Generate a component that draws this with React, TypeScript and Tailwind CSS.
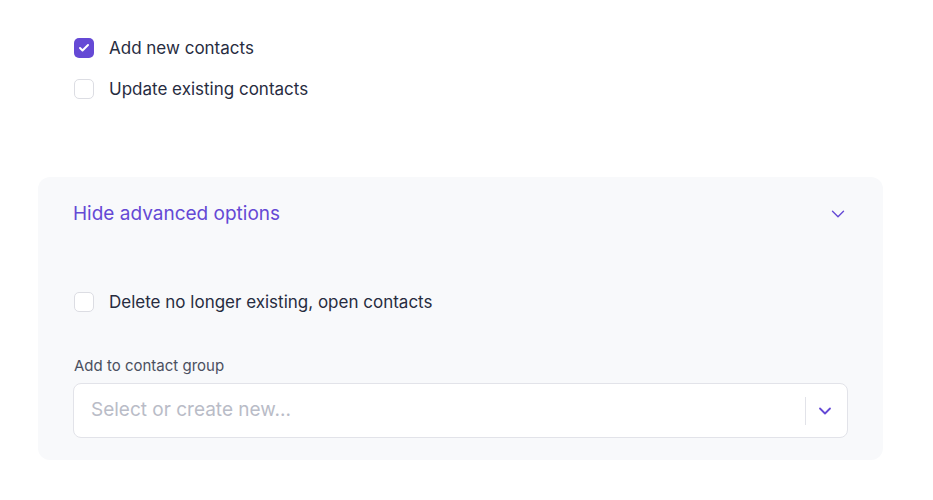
import { Check, ChevronDown } from "lucide-react";

function Box({ checked }: { checked?: boolean }) {
  return (
    <span
      className={
        checked
          ? "flex size-5 shrink-0 items-center justify-center rounded-[5px] bg-[#6549d5]"
          : "flex size-5 shrink-0 items-center justify-center rounded-[5px] border border-[#dcdde3] bg-white"
      }
    >
      {checked && <Check className="size-3 text-white" strokeWidth={4} />}
    </span>
  );
}

function Option({ label, checked }: { label: string; checked?: boolean }) {
  return (
    <label className="flex items-center gap-[15px] text-[17px] leading-[24px] text-[#272c3f]">
      <Box checked={checked} />
      {label}
    </label>
  );
}

export default function App() {
  return (
    <div className="min-h-[500px] bg-white font-['Inter',sans-serif]">
      <div className="flex flex-col gap-[17px] px-[74px] pt-[36px]">
        <Option label="Add new contacts" checked />
        <Option label="Update existing contacts" />
      </div>

      {/* advanced */}
      <div className="mx-[38px] mt-[76px] w-[845px] rounded-[12px] bg-[#f8f9fb] px-[35px] pt-[23px] pb-[22px]">
        <div className="flex items-center justify-between">
          <span className="text-[19px] leading-[28px] text-[#6549d5]">Hide advanced options</span>
          <ChevronDown className="mr-[-1px] size-[22px] text-[#6549d5]" strokeWidth={1.5} />
        </div>

        <div className="mt-[62px] pl-px">
          <Option label="Delete no longer existing, open contacts" />
        </div>

        <div className="mt-[42px] pl-px text-[15px] leading-[20px] text-[#4b5060]">Add to contact group</div>
        <div className="mt-[7px] flex h-[55px] items-center rounded-[8px] border border-[#e2e3e9] bg-white">
          <span className="flex-1 pl-[17px] text-[19px] text-[#b9bcc7]">Select or create new...</span>
          <span className="h-[28px] w-px bg-[#e2e3e9]" />
          <span className="flex w-[41px] justify-center pr-[3px]">
            <ChevronDown className="size-[20px] text-[#6549d5]" strokeWidth={2.2} />
          </span>
        </div>
      </div>
    </div>
  );
}
